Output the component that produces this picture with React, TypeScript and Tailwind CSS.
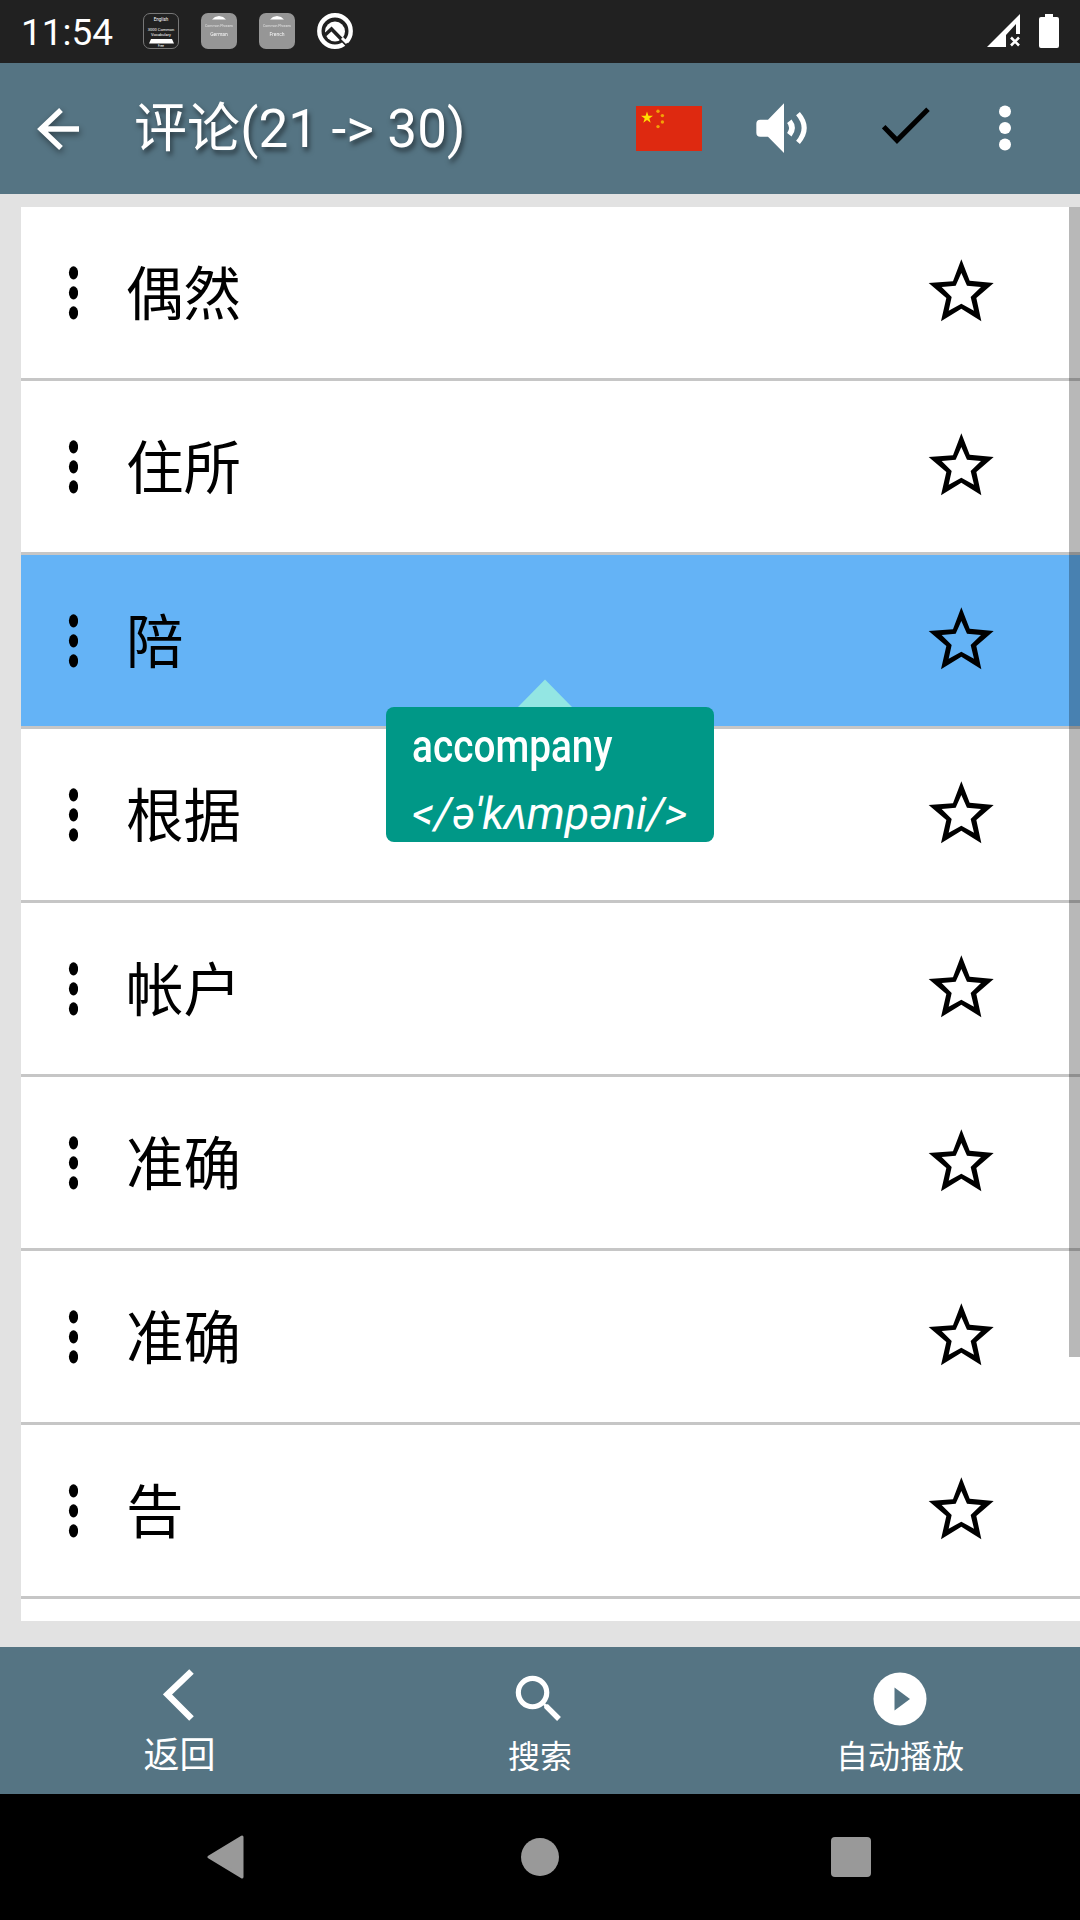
import React, { useState } from 'react';

const words = ['偶然', '住所', '陪', '根据', '帐户', '准确', '准确', '告'];

const StarIcon = () => (
    <svg width="66" height="63" viewBox="145 208 198 189" className="mb-1">
        <path
            fillRule="evenodd"
            d="M245 209L270 273L342 280L290 325L305 395L245 357L184 395L200 325L147 280L220 275ZM245 250L228 288L186 292L216 322L207 363L245 342L283 363L273 322L304 292L262 288Z"
        />
    </svg>
);

const DragDots = () => (
    <svg width="10" height="54" viewBox="0 0 10 54">
        <ellipse cx="5.500" cy="6.800" rx="4.600" ry="6.600" />
        <ellipse cx="5.500" cy="26.800" rx="4.600" ry="6.600" />
        <ellipse cx="5.500" cy="46.800" rx="4.600" ry="6.600" />
    </svg>
);

const AppBadge = ({ title, subtitle }: { title: string; subtitle: string }) => (
    <div className="w-9 h-9 mr-[22px] rounded-[7px] bg-[#969696] overflow-hidden flex flex-col items-center text-white">
        <svg width="14" height="4" viewBox="0 0 14 4" className="mt-[3px] shrink-0">
            <path d="M0 3.500L3 1L7 0L11 1L14 3.500Z" fill="#fff" />
        </svg>
        <span className="text-[3.500px] leading-[5px] mt-1 whitespace-nowrap opacity-70">{title}</span>
        <span className="text-[5px] leading-[6px] mt-[2px] opacity-90">{subtitle}</span>
    </div>
);

const StatusBar = () => (
    <div className="h-[63px] bg-[#212121] flex items-start text-white">
        <span className="w-[120px] ml-[21px] mr-0.5 mt-[11px] text-[37px] leading-[44px]">11:54</span>
        <div className="flex mt-[13px]">
            <div className="w-9 h-9 mr-[22px] rounded-[7px] border border-[#777] overflow-hidden flex flex-col items-center">
                <span className="text-[4.500px] leading-[6px] mt-[3px]">English</span>
                <span className="text-[4px] leading-[5px] mt-1 whitespace-nowrap">3000 Common</span>
                <span className="text-[4px] leading-[5px]">Vocabulary</span>
                <svg width="25" height="5" viewBox="0 0 25 5" className="mt-[2px] shrink-0">
                    <path d="M2 0H23L25 4.500H0Z" fill="#fff" />
                </svg>
                <span className="text-[3px] leading-[4px]">Free</span>
            </div>
            <AppBadge title="Common Phrases" subtitle="German" />
            <AppBadge title="Common Phrases" subtitle="French" />
            <svg width="36" height="37" viewBox="0 0 36 37">
                <circle cx="18" cy="18" r="15.700" fill="none" stroke="#fff" strokeWidth="4.400" />
                <circle cx="18" cy="18.500" r="10" fill="#fff" />
                <path d="M8 22L14.500 16L31 33" fill="none" stroke="#212121" strokeWidth="3.600" />
                <path d="M25 25L30 30" fill="none" stroke="#fff" strokeWidth="3" />
            </svg>
        </div>
        <svg width="74" height="36" viewBox="0 0 74 36" className="ml-auto mr-5 mt-[13px]" fill="#fff">
            <path fillRule="evenodd" d="M1 34L34 1V21H30V11L20 22V34Z" />
            <path d="M25 24.500L33 32.500M33 24.500L25 32.500" stroke="#fff" strokeWidth="2.600" />
            <path d="M59 1H67V4H71Q73 4 73 6V33Q73 35 71 35H55Q53 35 53 33V6Q53 4 55 4H59Z" />
        </svg>
    </div>
);

const ChinaFlag = () => (
    <svg width="66" height="45" viewBox="0 0 66 45" className="-mt-px">
        <rect width="66" height="45" fill="#de2910" />
        <path fill="#ffde00" d="M11 5.500L12.400 9.700H17L13.300 12.400L14.700 16.800L11 14.100L7.300 16.800L8.700 12.400L5 9.700H9.600Z" />
        <g fill="#f3a007">
            <circle cx="22" cy="5.300" r="1.700" />
            <circle cx="26.400" cy="9.600" r="1.700" />
            <circle cx="26.400" cy="16" r="1.700" />
            <circle cx="22" cy="20.600" r="1.700" />
        </g>
    </svg>
);

const Header = () => (
    <div className="h-[131px] bg-[#557483] flex items-center text-white">
        <svg width="44" height="44" viewBox="0 0 44 44" className="ml-[37px] mr-[53px] drop-shadow-[1px_3px_3px_rgba(0,0,0,0.45)]">
            <path d="M24 3L4 22L24 41M3 22H42" fill="none" stroke="#fff" strokeWidth="5.400" />
        </svg>
        <h1 className="grow pt-px text-[53px] leading-[64px] tracking-[0.1px] whitespace-nowrap [text-shadow:2px_4px_5px_rgba(0,0,0,0.5)]">评论(21 -&gt; 30)</h1>
        <ChinaFlag />
        <svg width="52" height="50" viewBox="468 130 156 150" className="ml-[54px] mb-px">
            <path d="M481 180H504L552 131V280L504 231H481Q469 231 469 219V192Q469 180 481 180Z" fill="#fff" />
            <path d="M568 185Q584 205 568 225" fill="none" stroke="#fff" strokeWidth="17" />
            <path d="M594 162Q631 205 594 248" fill="none" stroke="#fff" strokeWidth="15" />
        </svg>
        <svg width="48" height="38" viewBox="845 141 144 114" className="ml-[74px] -mt-[5px]">
            <path d="M850 200L890 241L983 148" fill="none" stroke="#000" strokeWidth="15" />
        </svg>
        <svg width="14" height="48" viewBox="0 0 14 48" className="ml-[68px] mr-[68px]" fill="#fff">
            <circle cx="7" cy="6.500" r="6" />
            <circle cx="7" cy="23" r="6" />
            <circle cx="7" cy="39.500" r="6" />
        </svg>
    </div>
);

const Tooltip = () => (
    <div className="absolute left-[365px] top-[124px] z-10 w-[328px] text-white">
        <svg width="54" height="28" viewBox="0 0 54 28" className="ml-[132px] block">
            <path d="M0 28L27 0.500L54 28Z" fill="#93e6e3" />
        </svg>
        <div className="h-[135px] rounded-[8px] bg-[#009887] pl-[26px] pt-[12px] whitespace-nowrap">
            <div className="text-[47px] leading-[54px] font-medium origin-left scale-x-[0.825]">accompany</div>
            <div className="mt-[14px] text-[44.800px] leading-[54px] italic">&lt;/ə'kʌmpəni/&gt;</div>
        </div>
    </div>
);

const BottomBar = () => (
    <div className="h-[147px] bg-[#557483] grid grid-cols-3 text-white">
        <div className="flex flex-col items-center pr-px">
            <svg width="32" height="54" viewBox="0 0 32 54" className="mt-[21px] mr-px">
                <path d="M28.500 3.500L4.500 26.500L28.500 50.500" fill="none" stroke="#fff" strokeWidth="6.500" />
            </svg>
            <span className="mt-[12px] text-[36px] leading-[44px]">返回</span>
        </div>
        <div className="flex flex-col items-center">
            <svg width="62" height="62" viewBox="0 0 24 24" className="mt-[21px] mr-0.5" fill="#fff">
                <path d="M15.500 14h-.790l-.280-.270A6.471 6.471 0 0 0 16 9.500 6.500 6.500 0 1 0 9.500 16c1.610 0 3.090-.590 4.230-1.570l.270.280v.790l5 4.990L20.490 19l-4.990-5zm-6 0C7.010 14 5 11.990 5 9.500S7.010 5 9.500 5 14 7.010 14 9.500 11.990 14 9.500 14z" />
            </svg>
            <span className="mt-[5px] text-[32px] leading-[44px]">搜索</span>
        </div>
        <div className="flex flex-col items-center">
            <svg width="54" height="54" viewBox="0 0 54 54" className="mt-[25px] mr-px">
                <circle cx="27" cy="27" r="26.500" fill="#fff" />
                <path d="M21.500 15.500L37 27L21.500 38.500Z" fill="#557483" />
            </svg>
            <span className="mt-[9px] text-[32px] leading-[44px]">自动播放</span>
        </div>
    </div>
);

const NavBar = () => (
    <div className="h-[126px] bg-black flex items-center justify-between pl-[206px] pr-[209px]">
        <svg width="38" height="44" viewBox="0 0 38 44">
            <path d="M3 22L36 2V42Z" fill="#999" stroke="#999" strokeWidth="3" strokeLinejoin="round" />
        </svg>
        <div className="w-[38px] h-[38px] rounded-full bg-[#999] mr-[-38px] -ml-[34px]" />
        <div className="w-10 h-10 rounded bg-[#999]" />
    </div>
);

export default function App() {
    const [selected, setSelected] = useState(2);

    return (
        <div className="w-[1080px] h-[1920px] overflow-hidden flex flex-col bg-[#e2e2e2] font-['Roboto','Noto_Sans_CJK_SC',sans-serif]">
            <StatusBar />
            <Header />
            <div className="relative mt-[13px] mb-[26px] ml-[21px] h-[1414px] bg-white">
                <ul>
                    {words.map((word, i) => (
                        <li
                            key={i}
                            onClick={() => setSelected(i)}
                            className={`relative h-[174px] border-b-[3px] border-[#c6c6c6] flex items-center pl-[47px] pr-[86px] ${i === selected ? 'bg-[#64b3f6]' : 'bg-white'}`}
                        >
                            <DragDots />
                            <span className="ml-[48px] pt-[7px] grow text-[57.500px] leading-[80px] text-black">{word}</span>
                            <StarIcon />
                            {i === selected && <Tooltip />}
                        </li>
                    ))}
                </ul>
                <div className="absolute right-0 top-0 z-20 w-[11px] h-[1150px] bg-black/28" />
            </div>
            <BottomBar />
            <NavBar />
        </div>
    );
}
